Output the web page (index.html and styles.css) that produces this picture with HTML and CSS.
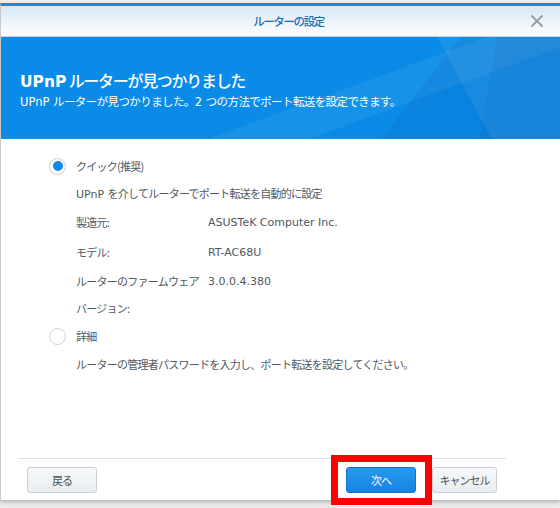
FILE: index.html
```html
<!DOCTYPE html>
<html lang="ja">
<head>
<meta charset="utf-8">
<link rel="stylesheet" href="styles.css">
</head>
<body>
<div class="topstrip"></div>
<div class="dialog">
  <div class="titlebar">
    <span class="title">ルーターの設定</span>
    <svg class="close" width="14" height="14" viewBox="0 0 14 14"><path d="M1.5 1.5 L12.5 12.5 M12.5 1.5 L1.5 12.5" stroke="#9b9b9b" stroke-width="1.8" fill="none"/></svg>
  </div>
  <div class="hero">
    <div class="hero-title"><b>UPnP</b> ルーターが見つかりました</div>
    <div class="hero-sub"><span class="lat">UPnP </span>ルーターが見つかりました。<span class="lat">2 </span>つの方法でポート転送を設定できます。</div>
  </div>
  <div class="content">
    <div class="radio-row r1">
      <span class="radio checked"><span class="dot"></span></span>
      <span>クイック(推奨)</span>
    </div>
    <div class="line r2"><span class="lat">UPnP </span>を介してルーターでポート転送を自動的に設定</div>
    <div class="kv r3"><span class="k">製造元:</span><span class="v">ASUSTeK Computer Inc.</span></div>
    <div class="kv r4"><span class="k">モデル:</span><span class="v">RT-AC68U</span></div>
    <div class="kv r5"><span class="k">ルーターのファームウェア<br>バージョン:</span><span class="v">3.0.0.4.380</span></div>
    <div class="radio-row r6">
      <span class="radio"></span>
      <span>詳細</span>
    </div>
    <div class="line r7">ルーターの管理者パスワードを入力し、ポート転送を設定してください。</div>
  </div>
  <div class="footer">
    <div class="sep"></div>
    <div class="buttons">
      <button class="btn">戻る</button>
      <span class="spacer"></span>
      <button class="btn primary">次へ</button>
      <button class="btn cancel">キャンセル</button>
    </div>
    <div class="highlight"></div>
  </div>
</div>
<div class="below"></div>
</body>
</html>
```
FILE: styles.css
```css
* { box-sizing: border-box; }
html, body { margin: 0; padding: 0; }
body {
  width: 560px;
  height: 508px;
  overflow: hidden;
  background: #ececec;
  font-family: "DejaVu Sans", "Noto Sans CJK JP", sans-serif;
  color: #4f5861;
}
.topstrip {
  height: 3px;
  background: #f1eded;
}
.dialog {
  height: 497px;
  background: #fff;
  border-top: 3px solid #1a89e6;
  border-left: 1px solid #c9c9c9;
  display: flex;
  flex-direction: column;
  box-shadow: 0 2px 4px rgba(0,0,0,0.25);
  position: relative;
}
.titlebar {
  height: 31px;
  border-bottom: 1px solid #c9d3dc;
  background: linear-gradient(#d8e8f6, #fdfeff);
  display: flex;
  align-items: center;
  padding: 0 16px 0 0;
}
.title {
  flex: 1;
  text-align: center;
  padding-left: 46px;
  font-family: "Noto Sans CJK JP", sans-serif;
  font-size: 11.5px;
  font-weight: 500;
  color: #1d6db6;
  letter-spacing: -1.4px;
}
.close { display: block; }
.hero {
  height: 102px;
  padding: 33px 0 0 19px;
  color: #fff;
  background-color: #0a8be8;
  background-image:
    linear-gradient(128deg, transparent 72%, rgba(0,60,140,0.10) 72%),
    linear-gradient(62deg, transparent 80%, rgba(255,255,255,0.07) 80%),
    linear-gradient(160deg, transparent 58%, rgba(255,255,255,0.06) 58%, rgba(255,255,255,0.06) 70%, transparent 70%),
    linear-gradient(100deg, transparent 86%, rgba(0,50,130,0.08) 86%);
}
.hero-title {
  font-family: "Noto Sans CJK JP", sans-serif;
  font-size: 16px;
  line-height: 21px;
  font-weight: 500;
  letter-spacing: -1.3px;
}
.hero-title b {
  font-family: "DejaVu Sans", sans-serif;
  font-weight: 700;
  letter-spacing: 0;
  font-size: 15.5px;
}
.hero-sub {
  font-family: "Noto Sans CJK JP", sans-serif;
  font-size: 11.5px;
  line-height: 17px;
  letter-spacing: -0.6px;
}
.lat {
  font-family: "DejaVu Sans", sans-serif;
  letter-spacing: 0;
}
.content {
  flex: 1;
  padding: 13px 0 0 48px;
  font-family: "Noto Sans CJK JP", sans-serif;
  font-size: 11px;
  letter-spacing: -0.75px;
}
.radio-row {
  display: flex;
  align-items: center;
  height: 28px;
  gap: 10px;
}
.radio {
  width: 17px;
  height: 17px;
  border-radius: 50%;
  border: 1px solid #cdd0d4;
  background: #fff;
  display: flex;
  align-items: center;
  justify-content: center;
  flex: none;
}
.radio.checked { border-color: #c8ccd1; }
.dot {
  width: 10px;
  height: 10px;
  border-radius: 50%;
  background: #1387ea;
}
.line, .kv { padding-left: 27px; line-height: 27px; }
.kv { display: flex; }
.k { width: 132px; flex: none; }
.v {
  font-family: "DejaVu Sans", sans-serif;
  font-size: 11px;
  letter-spacing: 0;
  color: #4f5861;
}
.r3 { margin-top: 1px; }
.r4 { margin-top: 3px; }
.r5 { margin-top: 2px; }
.r6 { margin-top: 0; }
.r7 { margin-top: 1px; }
.footer {
  height: 48px;
  position: relative;
}
.sep {
  height: 1px;
  background: #dcdfe3;
  margin: 6px 54px 0 17px;
}
.buttons {
  display: flex;
  align-items: center;
  padding: 8px 63px 0 26px;
}
.spacer { flex: 1; }
.btn {
  height: 26px;
  width: 70px;
  border: 1px solid #c9ced4;
  border-radius: 3px;
  background: linear-gradient(#f6f8fa, #e9edf1);
  font-family: "Noto Sans CJK JP", sans-serif;
  font-size: 11px;
  letter-spacing: -1px;
  color: #4a525a;
  padding: 0;
}
.btn.primary {
  background: linear-gradient(#2a98ee, #1284e3);
  border-color: #1672c4;
  color: #fff;
}
.btn.cancel {
  width: 65px;
  margin-left: 16px;
}
.highlight {
  position: absolute;
  left: 330px;
  top: 3px;
  width: 101px;
  height: 50px;
  border: 7px solid #ff0000;
}
.below {
  height: 8px;
}
```
